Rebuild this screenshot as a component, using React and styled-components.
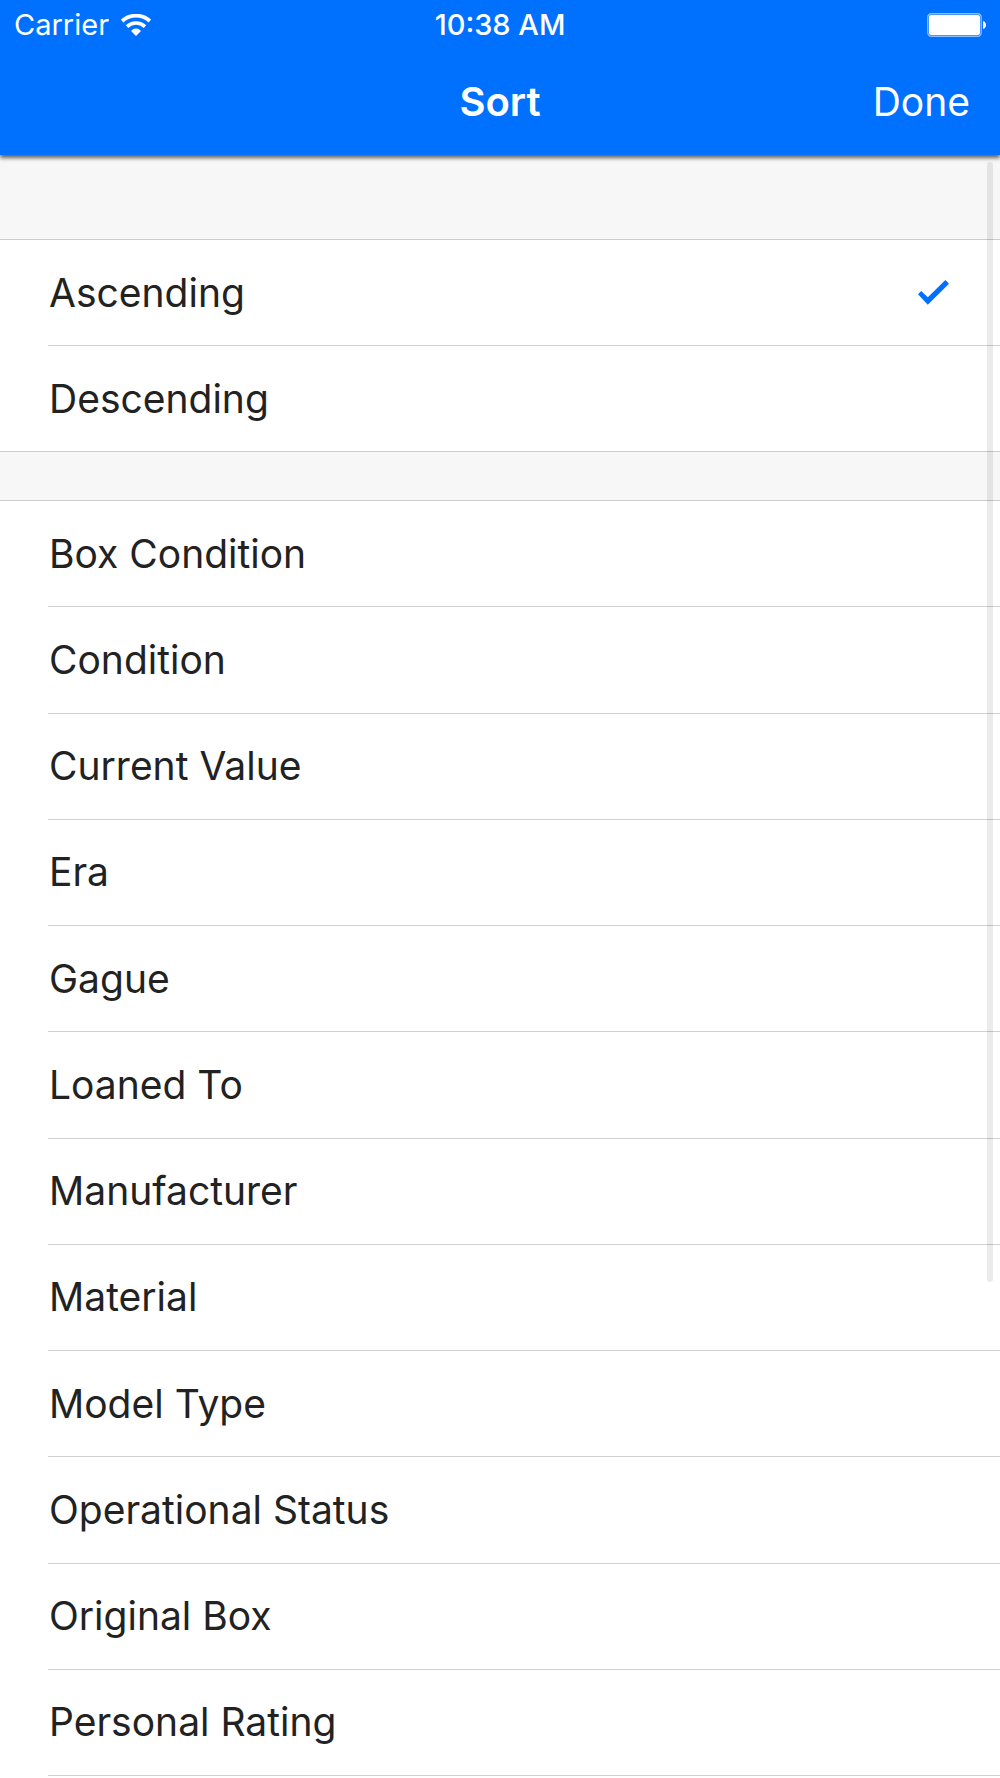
import React, { useState } from 'react';
import styled, { createGlobalStyle } from 'styled-components';

const GlobalStyle = createGlobalStyle`
  * {
    box-sizing: border-box;
  }

  body {
    margin: 0;
    background: #f7f7f7;
    font-family: Inter, 'Liberation Sans', sans-serif;
  }
`;

const Page = styled.div`
  min-height: 100vh;
  display: flex;
  flex-direction: column;
`;

const Header = styled.header`
  position: relative;
  z-index: 1;
  padding-bottom: 2px;
  background: #0070ff;
  color: #ffffff;
  box-shadow: 0 3px 4px rgba(40, 32, 26, 0.7);
`;

const StatusBar = styled.div`
  display: grid;
  grid-template-columns: 1fr auto 1fr;
  align-items: center;
  height: 50px;
  padding: 0 14px;
  font-size: 29px;
  line-height: 32px;
`;

const Carrier = styled.span`
  display: flex;
  align-items: center;
  gap: 12px;
`;

const Time = styled.time`
  font-weight: 500;
`;

const Battery = styled.svg`
  justify-self: end;
`;

const NavBar = styled.div`
  display: grid;
  grid-template-columns: 1fr auto 1fr;
  align-items: center;
  height: 103px;
  padding: 0 30px;
`;

const Title = styled.h1`
  grid-column: 2;
  margin: 0;
  font-size: 40px;
  line-height: 48px;
  font-weight: 600;
`;

const DoneButton = styled.button`
  justify-self: end;
  padding: 0;
  border: 0;
  background: transparent;
  color: inherit;
  font: inherit;
  font-size: 39px;
  line-height: 48px;
  cursor: pointer;
`;

const Content = styled.main`
  position: relative;
  flex: 1;
  display: flex;
  flex-direction: column;
  gap: 48px;
  padding-top: 84px;
`;

const Group = styled.div`
  display: flex;
  flex-direction: column;
  flex: ${props => (props.$fill ? '1' : 'none')};
  border-top: 1px solid #cccccc;
  border-bottom: ${props => (props.$fill ? '0' : '1px solid #cccccc')};
  padding-bottom: ${props => (props.$fill ? '2px' : '0')};
  background: #ffffff;
`;

const Row = styled.label`
  flex: 1 0 auto;
  min-height: ${props => (props.$divider ? '106px' : '105px')};
  display: flex;
  padding-left: 48px;
  color: #222222;
  font-size: 39px;
  line-height: 48px;
  cursor: pointer;
`;

const RowInner = styled.span`
  flex: 1;
  display: flex;
  align-items: center;
  justify-content: space-between;
  padding: 0 51px 0 1px;
  border-bottom: ${props => (props.$divider ? '1px solid #d0d0d0' : '0')};
`;

const Radio = styled.input`
  appearance: none;
  width: 0;
  height: 0;
  margin: 0;

  &:focus-visible + span {
    background: #f0f6ff;
  }
`;

const ScrollThumb = styled.div`
  position: absolute;
  top: 7px;
  right: 7px;
  width: 6px;
  height: 69%;
  border-radius: 3px;
  background: rgba(0, 0, 0, 0.08);
  pointer-events: none;
`;

const directions = ['Ascending', 'Descending'];

const fields = [
  'Box Condition',
  'Condition',
  'Current Value',
  'Era',
  'Gague',
  'Loaned To',
  'Manufacturer',
  'Material',
  'Model Type',
  'Operational Status',
  'Original Box',
  'Personal Rating'
];

const WifiIcon = () => (
  <svg width="30" height="22" viewBox="0 0 30 22" fill="none" aria-hidden="true">
    <path d="M1.1 7C9 -0.2 21 -0.2 28.9 7" stroke="#ffffff" strokeWidth="3.8" />
    <path d="M6 12.6C11.2 7.7 18.8 7.7 24 12.6" stroke="#ffffff" strokeWidth="3.6" />
    <path d="M10 17C13 13.7 17 13.7 20 17L15 22Z" fill="#ffffff" />
  </svg>
);

const BatteryIcon = () => (
  <Battery width="59" height="24" viewBox="0 0 59 24" role="img" aria-label="Battery full">
    <rect x="0.8" y="0.8" width="53.4" height="22.4" rx="3.5" fill="none" stroke="#8cbfff" strokeWidth="1.4" />
    <rect x="2" y="2" width="51" height="20" rx="2" fill="#ffffff" />
    <path d="M56 8C60 9 60 15 56 16Z" fill="#ffffff" />
  </Battery>
);

const CheckIcon = () => (
  <svg width="31" height="25" viewBox="0 0 31 25" aria-hidden="true">
    <path d="M0 14.3L3.2 11.1L9.8 17.2L27.4 0L31 3.8L9.8 24.7Z" fill="#0070ff" />
  </svg>
);

const OptionGroup = ({ name, label, options, value, onChange, fill }) => (
  <Group role="radiogroup" aria-label={label} $fill={fill}>
    {options.map((option, index) => {
      const divider = fill || index < options.length - 1;

      return (
        <Row key={option} $divider={divider}>
          <Radio
            type="radio"
            name={name}
            value={option}
            checked={value === option}
            onChange={() => onChange(option)}
          />
          <RowInner $divider={divider}>
            {option}
            {value === option && <CheckIcon />}
          </RowInner>
        </Row>
      );
    })}
  </Group>
);

const App = () => {
  const [direction, setDirection] = useState('Ascending');
  const [field, setField] = useState('');

  return (
    <Page>
      <GlobalStyle />
      <Header>
        <StatusBar>
          <Carrier>
            Carrier
            <WifiIcon />
          </Carrier>
          <Time>10:38 AM</Time>
          <BatteryIcon />
        </StatusBar>
        <NavBar>
          <Title>Sort</Title>
          <DoneButton type="button">Done</DoneButton>
        </NavBar>
      </Header>

      <Content>
        <OptionGroup
          name="direction"
          label="Sort direction"
          options={directions}
          value={direction}
          onChange={setDirection}
        />
        <OptionGroup
          name="field"
          label="Sort by"
          options={fields}
          value={field}
          onChange={setField}
          fill
        />
        <ScrollThumb />
      </Content>
    </Page>
  );
};

export default App;
